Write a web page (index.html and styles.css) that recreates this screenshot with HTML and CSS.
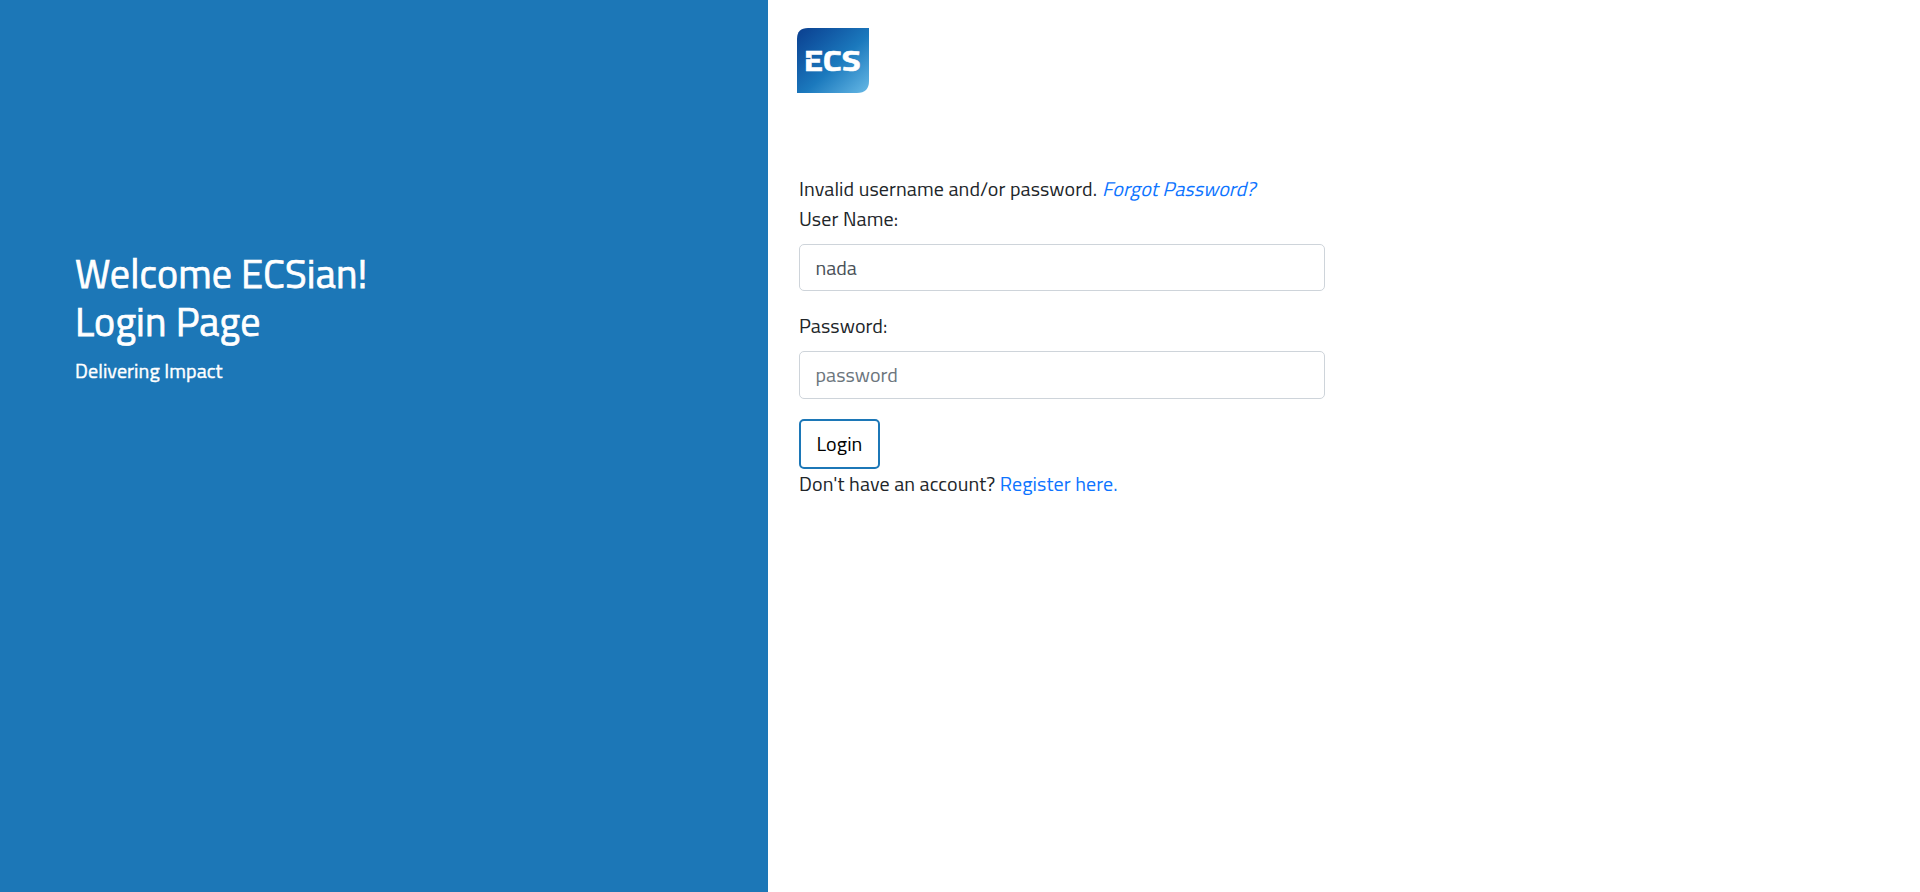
FILE: index.html
```html
<!DOCTYPE html>
<html lang="en">
<head>
<meta charset="utf-8">
<title>Login Page</title>
<link rel="stylesheet" href="styles.css">
</head>
<body>
<div class="page">
  <aside class="sidenav">
    <h2 class="welcome">Welcome ECSian!<br>Login Page</h2>
    <p class="tagline">Delivering Impact</p>
  </aside>
  <main class="main">
    <svg class="logo" viewBox="0 0 72 65" role="img" aria-label="ECS">
      <defs>
        <linearGradient id="logo-fill" x1="0" y1="0" x2="1" y2="1">
          <stop offset="0" stop-color="#0b3f8f"/>
          <stop offset=".25" stop-color="#1158a4"/>
          <stop offset=".55" stop-color="#1b79bd"/>
          <stop offset="1" stop-color="#67b9e6"/>
        </linearGradient>
      </defs>
      <path d="M11 0H72V53Q72 65 60 65H0V11Q0 0 11 0Z" fill="url(#logo-fill)"/>
      <text class="logo-text" x="6.7" y="42.5" textLength="57" lengthAdjust="spacingAndGlyphs">ECS</text>
      <path d="M7 30.5H13.5" stroke="#145fa8" stroke-width="1.3"/>
    </svg>
    <form class="login-form">
      <div class="message">Invalid username and/or password. <a class="link forgot" href="#">Forgot Password?</a></div>
      <div class="form-group">
        <label class="label" for="user">User Name:</label>
        <input class="control" id="user" type="text" value="nada">
      </div>
      <div class="form-group">
        <label class="label" for="password">Password:</label>
        <input class="control control-password" id="password" type="password" placeholder="password">
      </div>
      <button class="button" type="button">Login</button>
      <div class="signup">Don't have an account? <a class="link" href="#">Register here.</a></div>
    </form>
  </main>
</div>
</body>
</html>
```
FILE: styles.css
```css
* { box-sizing: border-box; }
body {
  margin: 0;
  font: 400 20px/30px "Titillium Web", Roboto, sans-serif;
  letter-spacing: .09px;
  color: #212529;
  background: #fff;
}
.page { display: flex; height: 892px; }
.sidenav {
  width: 768px;
  padding: 250px 75px 0;
  background: #1c77b7;
  color: #fff;
}
.welcome {
  margin: 0 0 10px;
  font-size: 40px;
  line-height: 48px;
  font-weight: 500;
  letter-spacing: .16px;
  -webkit-text-stroke: .75px #fff;
}
.tagline { margin: 0; font-weight: 500; -webkit-text-stroke: .4px #fff; }
.main { flex: 1; padding: 28px 0 0 29px; }
.logo { display: block; width: 72px; height: 65px; }
.logo-text {
  font: 700 29.5px "Titillium Web", Roboto, sans-serif;
  letter-spacing: 0;
  fill: #fff;
  stroke: #fff;
  stroke-width: .6px;
}
.login-form { width: 526px; margin: 80.75px 0 0 2px; }
.message, .signup { white-space: nowrap; }
.form-group { margin-bottom: 20px; }
.label { display: block; margin-bottom: 10px; }
.control {
  display: block;
  width: 100%;
  height: 47.5px;
  padding: 7.5px 15.5px;
  border: 1px solid #ced4da;
  border-radius: 5px;
  background: #fff;
  font: inherit;
  color: #495057;
}
.control-password { padding-top: 6.5px; padding-bottom: 8.5px; letter-spacing: .05px; }
.control::placeholder { color: #6c757d; opacity: 1; }
.button {
  display: block;
  width: 81px;
  height: 50px;
  padding: 0;
  border: 2px solid #1c77b7;
  border-radius: 5px;
  background: #fff;
  font: inherit;
  letter-spacing: .09px;
  color: #000;
}
.link { color: #0d74ff; text-decoration: none; }
.forgot {
  display: inline-block;
  transform: skewX(-14deg);
  transform-origin: 0 22px;
}
```
